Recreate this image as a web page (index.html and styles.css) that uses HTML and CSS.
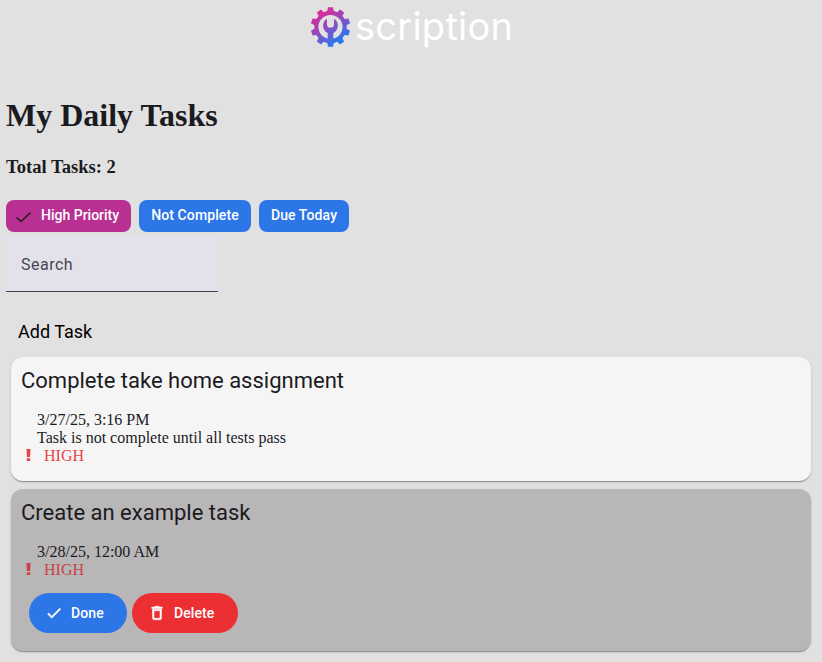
FILE: index.html
```html
<!DOCTYPE html>
<html lang="en">
<head>
<meta charset="utf-8">
<title>My Daily Tasks</title>
<link rel="stylesheet" href="styles.css">
</head>
<body>
<header class="header">
  <svg class="logo" width="41" height="42" viewBox="-21 -21 42 42" aria-hidden="true">
    <defs>
      <linearGradient id="brand" gradientUnits="userSpaceOnUse" x1="-10" y1="-14" x2="9" y2="16">
        <stop offset="0" stop-color="#d92d9c"/>
        <stop offset=".5" stop-color="#8450c5"/>
        <stop offset="1" stop-color="#1f7cf2"/>
      </linearGradient>
      <path id="tooth" d="M-3.5-15L-2.6-20.2H2.6L3.5-15Z"/>
      <clipPath id="gear">
        <path clip-rule="evenodd" d="M0-16.6A16.6 16.6 0 1 1 0 16.6A16.6 16.6 0 1 1 0-16.6ZM0-12.4A12.4 12.4 0 1 0 0 12.4A12.4 12.4 0 1 0 0-12.4Z"/>
        <use href="#tooth"/>
        <use href="#tooth" transform="rotate(36)"/>
        <use href="#tooth" transform="rotate(72)"/>
        <use href="#tooth" transform="rotate(108)"/>
        <use href="#tooth" transform="rotate(144)"/>
        <use href="#tooth" transform="rotate(180)"/>
        <use href="#tooth" transform="rotate(216)"/>
        <use href="#tooth" transform="rotate(252)"/>
        <use href="#tooth" transform="rotate(288)"/>
        <use href="#tooth" transform="rotate(324)"/>
        <path d="M-3.6-8.4C-9-5.6-9 3.4-2.9 6.2V14H2.9V6.2C9 3.4 9-5.6 3.6-8.4V-2.6C3.6-.4 2 .8 0 .8S-3.6-.4-3.6-2.6Z"/>
      </clipPath>
    </defs>
    <rect x="-21" y="-21" width="42" height="42" fill="url(#brand)" clip-path="url(#gear)"/>
  </svg>
  <svg class="wordmark" width="170" height="60" viewBox="0 0 170 60">
    <text x="4" y="39.5" textLength="158" lengthAdjust="spacing">scription</text>
  </svg>
</header>
<main>
  <h1 class="title">My Daily Tasks</h1>
  <h3 class="total">Total Tasks: 2</h3>
  <div class="chips">
    <button class="chip chip-selected"><svg class="chip-check" viewBox="0 0 18 14" width="18" height="14"><path d="M1.5 7.5L6 11.5L15.5 2.5"/></svg>High Priority</button>
    <button class="chip">Not Complete</button>
    <button class="chip">Due Today</button>
  </div>
  <label class="search">Search</label>
  <div class="add">Add Task</div>
  <section class="card">
    <h2 class="card-title">Complete take home assignment</h2>
    <p class="line">3/27/25, 3:16 PM</p>
    <p class="line">Task is not complete until all tests pass</p>
    <p class="priority"><svg class="bang" viewBox="0 0 5 12" width="5" height="12"><path d="M.5 0h4l-.4 8h-3.2zM.8 9.2h3.4V12h-3.4z"/></svg>HIGH</p>
  </section>
  <section class="card card-active">
    <h2 class="card-title">Create an example task</h2>
    <p class="line">3/28/25, 12:00 AM</p>
    <p class="priority"><svg class="bang" viewBox="0 0 5 12" width="5" height="12"><path d="M.5 0h4l-.4 8h-3.2zM.8 9.2h3.4V12h-3.4z"/></svg>HIGH</p>
    <div class="actions">
      <button class="btn btn-done"><svg width="18" height="18" viewBox="0 0 24 24"><path d="M9 16.17L4.83 12l-1.42 1.41L9 19 21 7l-1.41-1.41z"/></svg>Done</button>
      <button class="btn btn-delete"><svg width="18" height="18" viewBox="0 0 24 24"><path d="M6 19c0 1.1.9 2 2 2h8c1.1 0 2-.9 2-2V7H6v12zM8 9h8v10H8V9zm7.5-5l-1-1h-5l-1 1H5v2h14V4z"/></svg>Delete</button>
    </div>
  </section>
</main>
</body>
</html>
```
FILE: styles.css
```css
* {
  box-sizing: border-box;
}

body {
  margin: 0;
  height: 662px;
  overflow: hidden;
  background: #e1e1e1;
  color: #1b1b1f;
  font: 16px/18px "Liberation Serif", serif;
}

button {
  border: 0;
  margin: 0;
  font: 500 14px/20px Roboto, sans-serif;
  letter-spacing: .1px;
  white-space: nowrap;
  color: #fff;
}

.header {
  display: flex;
  padding-left: 310px;
  height: 95px;
}

.logo {
  margin-top: 6px;
}

.wordmark {
  overflow: visible;
}

.wordmark text {
  font-family: Inter, sans-serif;
  font-weight: 400;
  font-size: 38px;
  fill: #fff;
}

main {
  padding: 0 11px 0 6px;
}

.title {
  margin: 0;
  font-size: 32px;
  line-height: 40px;
}

.total {
  margin: 21px 0 0;
  font-size: 18.6px;
  line-height: 22px;
}

.chips {
  display: flex;
  gap: 8px;
  margin-top: 22px;
}

.chip {
  width: 90px;
  height: 32px;
  padding: 0 0 2px;
  border-radius: 8px;
  background: #2d76e7;
}

.chip:nth-child(2) {
  width: 112px;
}

.chip-selected {
  display: flex;
  align-items: center;
  width: 125px;
  background: #b83192;
  padding: 0 0 2px 9px;
  letter-spacing: 0;
}

.chip-check {
  margin: 4px 8px 0 0;
  fill: none;
  stroke: #1b1b1f;
  stroke-width: 1.5;
}

.search {
  display: block;
  width: 212px;
  height: 56px;
  margin-top: 4px;
  padding: 17px 15px;
  border-bottom: 1px solid #45464f;
  border-radius: 4px 4px 0 0;
  background: #e4e1ec;
  color: #45464f;
  font: 16px/24px Roboto, sans-serif;
  letter-spacing: .5px;
}

.add {
  margin-top: 28px;
  padding-left: 12px;
  height: 37px;
  color: #000;
  font: 18px/24px Roboto, sans-serif;
}

.card {
  height: 124px;
  margin-left: 5px;
  padding: 10px 10px 9px;
  border-radius: 12px;
  background: #f5f5f5;
  box-shadow: 0 2px 1px -1px rgba(0, 0, 0, .2), 0 1px 1px rgba(0, 0, 0, .14), 0 1px 3px rgba(0, 0, 0, .12);
}

.card-active {
  height: 162px;
  margin-top: 8px;
  background: #b8b6b7;
}

.card-title {
  margin: 0 0 16px;
  font: 22px/28px Roboto, sans-serif;
}

.line {
  margin: 0;
  padding-left: 16px;
}

.priority {
  display: flex;
  align-items: center;
  margin: 0;
  padding-left: 5px;
  color: #e64646;
}

.card-active .priority {
  color: #ca4446;
}

.bang {
  margin: 0 13px 2px 0;
  fill: currentColor;
}

.actions {
  display: flex;
  gap: 5px;
  padding: 14px 0 0 8px;
}

.btn {
  display: flex;
  align-items: center;
  gap: 8px;
  height: 40px;
  width: 98px;
  padding: 0 0 0 16px;
  border-radius: 20px;
}

.btn svg {
  fill: currentColor;
  stroke: currentColor;
  stroke-width: .7;
}

.btn-done {
  background: #2d76e7;
}

.btn-delete {
  width: 106px;
  background: #ec2f32;
}
```
